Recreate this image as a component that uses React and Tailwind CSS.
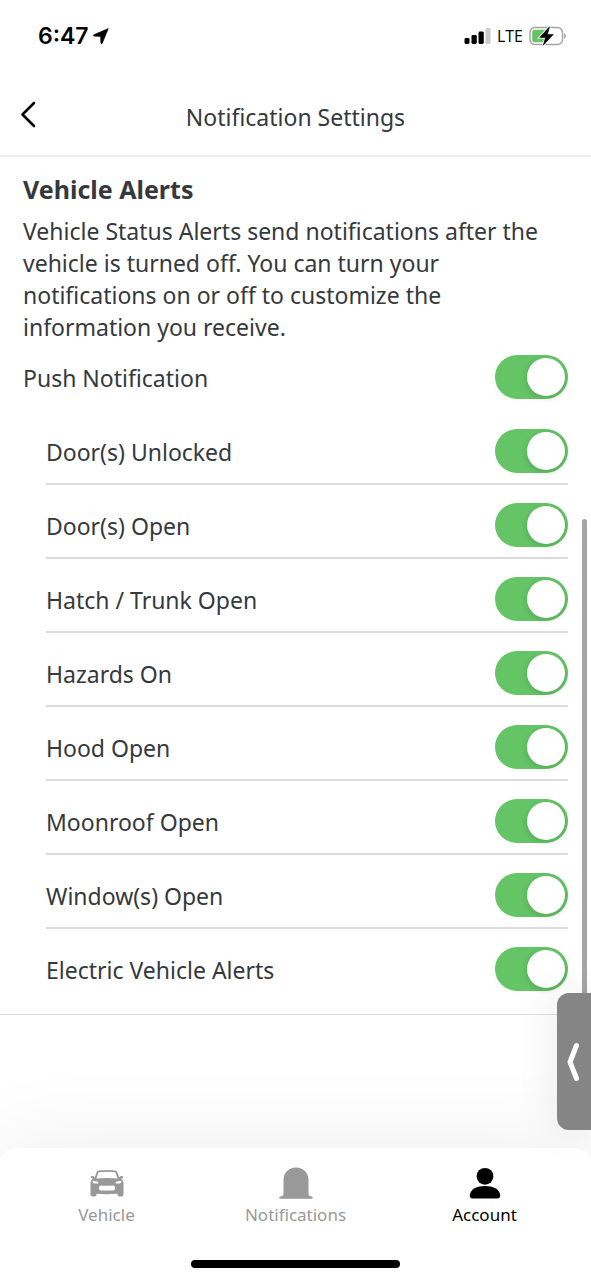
import React, { useState } from 'react';

const ALERTS = [
  { id: 'door-unlocked', label: 'Door(s) Unlocked' },
  { id: 'door-open', label: 'Door(s) Open' },
  { id: 'hatch', label: 'Hatch / Trunk Open' },
  { id: 'hazards', label: 'Hazards On' },
  { id: 'hood', label: 'Hood Open' },
  { id: 'moonroof', label: 'Moonroof Open' },
  { id: 'windows', label: 'Window(s) Open' },
  { id: 'ev', label: 'Electric Vehicle Alerts' },
];

function Toggle({ id, checked, onChange }) {
  return (
    <input
      id={id}
      type="checkbox"
      role="switch"
      checked={checked}
      onChange={onChange}
      className="h-11 w-[73px] shrink-0 cursor-pointer appearance-none rounded-full bg-gray-300 p-[3px] before:block before:size-[38px] before:rounded-full before:bg-white before:shadow-[0_2px_6px_rgba(0,0,0,0.15)] before:content-[''] checked:bg-[#64c466] checked:before:ml-auto"
    />
  );
}

function StatusBar() {
  return (
    <div className="flex h-[72px] items-center justify-between pr-6 pl-[38px] text-black">
      <div className="flex items-center gap-1">
        <span className="font-['Inter',sans-serif] text-[23px] font-semibold">6:47</span>
        <svg className="size-4" viewBox="0 0 16 16" fill="currentColor">
          <path d="M15.300 .6 .7 6.800c-.6.300-.5 1.200.2 1.300l6.700.400.300 6.700c.1.700 1 .8 1.300.200z" stroke="currentColor" strokeWidth=".6" strokeLinejoin="round" />
        </svg>
      </div>
      <div className="flex items-center gap-1.5">
        <svg className="h-4 w-[27px]" viewBox="0 0 27 16">
          <rect x="0.500" y="10" width="5" height="6" rx="1.4" />
          <rect x="7.500" y="7" width="5.300" height="9" rx="1.4" />
          <rect x="14.500" y="3.500" width="5.300" height="12.500" rx="1.4" />
          <rect x="21.500" y="0" width="5" height="16" rx="1.4" fill="#cbcbcb" />
        </svg>
        <span className="font-['Open_Sans',sans-serif] text-base font-medium">LTE</span>
        <svg className="h-5 w-[38px]" viewBox="0 0 38 20">
          <rect x="1" y="1.500" width="32.500" height="17" rx="5" fill="none" stroke="#a3a3a3" strokeWidth="1.400" />
          <path d="M6 3.800h10.500v12.400H6a2.800 2.800 0 0 1-2.800-2.800V6.600A2.800 2.800 0 0 1 6 3.800z" fill="#64c466" />
          <path d="M35 7.300c2.400.6 2.400 4.800 0 5.400z" fill="#a3a3a3" />
          <path d="M20.500 .8 10.700 11.600h5.800L14.300 19.200 24.300 8.400h-5.900z" stroke="#fff" strokeWidth="2.400" />
          <path d="M20.500 .8 10.700 11.600h5.800L14.300 19.200 24.300 8.400h-5.900z" stroke="#000" strokeWidth=".6" strokeLinejoin="round" />
        </svg>
      </div>
    </div>
  );
}

function Header() {
  return (
    <header className="grid h-[85px] grid-cols-[48px_1fr_48px] items-center border-b-2 border-[#ececec] px-2">
      <button type="button" aria-label="Back" className="flex h-12 items-center justify-center pr-2">
        <svg className="h-7 w-4" viewBox="0 0 16 28" fill="none" stroke="#000" strokeWidth="2.600" strokeLinecap="round" strokeLinejoin="round">
          <path d="M14 3 2.500 14.500 14 26" />
        </svg>
      </button>
      <h1 className="pt-2 text-center text-[23px]">Notification Settings</h1>
    </header>
  );
}

function CarIcon() {
  return (
    <svg className="h-8 w-9" viewBox="0 0 36 32" fill="currentColor">
      <path
        fillRule="evenodd"
        d="M9.500 3.500C15 2.700 21 2.700 26.500 3.500c.9.200 1.500.6 1.800 1.500l2 5.600c.4-1 1.500-1.600 2.700-1.500 1.500.1 1.700 1.700.4 2.100l-1.300.5c1.800 1.300 2.400 2.600 2.400 4.500v11.300c0 1.300-.8 2-2 2h-2c-1.200 0-2-.7-2-2v-.7c-6.500.5-14.500.5-21 0v.7c0 1.300-.8 2-2 2h-2c-1.200 0-2-.7-2-2V16.200c0-1.900.6-3.200 2.400-4.500l-1.300-.5C1.300 10.800 1.500 9.200 3 9.100c1.200-.1 2.300.5 2.700 1.500l2-5.600c.3-.9.900-1.300 1.800-1.500zM9.600 5.300 7.400 11.600c7-.7 14.200-.7 21.200 0L26.400 5.300C21 4.500 15 4.500 9.600 5.300zM3.600 14c0 1.800.6 2.400 1.900 2.400h3.900c.2-1.300-.6-2.100-2.200-2.200zm28.800 0-3.600.2c-1.600.1-2.400.9-2.200 2.200h3.900c1.300 0 1.900-.6 1.900-2.400zM12 18.400c-1.400 0-2.100.9-2.100 2.500s.7 2.500 2.100 2.500h12c1.400 0 2.100-.9 2.100-2.500s-.7-2.500-2.100-2.500c-4 .4-8 .4-12 0z"
      />
    </svg>
  );
}

function BellIcon() {
  return (
    <svg className="h-8 w-9" viewBox="0 0 36 32" fill="currentColor">
      <path d="M5.500 13C5.500 5.500 10.800 .5 18 .5s12.500 5 12.500 12.500v13.500c0 2 1 2.600 3.300 3 1.300.3 1.300 2.300-.1 2.300H2.300c-1.400 0-1.400-2-.1-2.300 2.300-.4 3.300-1 3.300-3z" />
    </svg>
  );
}

function PersonIcon() {
  return (
    <svg className="h-8 w-9" viewBox="0 0 36 32" fill="currentColor">
      <circle cx="18" cy="9.300" r="8.400" />
      <path d="M2.800 28C3.500 22 10 18.900 18 18.900s14.500 3.100 15.200 9.100c.2 2.200-.8 3.600-2.800 3.600H5.600c-2 0-3-1.400-2.800-3.600z" />
    </svg>
  );
}

const TABS = [
  { label: 'Vehicle', Icon: CarIcon },
  { label: 'Notifications', Icon: BellIcon },
  { label: 'Account', Icon: PersonIcon },
];

function TabBar() {
  const [active, setActive] = useState('Account');
  return (
    <nav className="rounded-t-2xl bg-white px-3 pt-[19px] pb-[11px] shadow-[0_0_90px_rgba(0,0,0,0.08)]">
      <div className="grid grid-cols-3">
        {TABS.map(({ label, Icon }) => (
          <button
            key={label}
            type="button"
            onClick={() => setActive(label)}
            className={`flex flex-col items-center gap-1 text-[17px] leading-6 ${active === label ? 'text-black' : 'text-[#999999]'}`}
          >
            <Icon />
            {label}
          </button>
        ))}
      </div>
      <div className="mx-auto mt-[33px] h-2 w-[37%] rounded-full bg-black" />
    </nav>
  );
}

export default function App() {
  const [push, setPush] = useState(true);
  const [enabled, setEnabled] = useState(() => Object.fromEntries(ALERTS.map((a) => [a.id, true])));

  const toggle = (id) => setEnabled((prev) => ({ ...prev, [id]: !prev[id] }));

  return (
    <div className="relative flex min-h-screen flex-col overflow-hidden bg-white font-['Noto_Sans',sans-serif] text-[#35393d]">
      <StatusBar />
      <Header />

      <main className="grow pb-24">
        <section className="border-b border-[#dddddd] pt-4 pr-[23px] pb-[11px] pl-[23px]">
          <h2 className="text-[25px] leading-8 font-bold">Vehicle Alerts</h2>
          <p className="mt-[10px] pr-4 text-[23px] leading-8">
            Vehicle Status Alerts send notifications after the vehicle is turned off. You can turn your notifications on
            or off to customize the information you receive.
          </p>

          <div className="mt-3 flex items-center justify-between">
            <label htmlFor="push" className="pt-0.5 text-[23px]">Push Notification</label>
            <Toggle id="push" checked={push} onChange={() => setPush(!push)} />
          </div>

          <ul className="mt-3 pl-[23px]">
            {ALERTS.map(({ id, label }) => (
              <li
                key={id}
                className="flex items-center justify-between border-b-2 border-[#dbdbe0] pt-[18px] pb-[10px] last:border-transparent"
              >
                <label htmlFor={id} className="pt-0.5 text-[23px]">{label}</label>
                <Toggle id={id} checked={enabled[id]} onChange={() => toggle(id)} />
              </li>
            ))}
          </ul>
        </section>
      </main>

      <TabBar />

      {/* scroll indicator and edge panel handle sit over the list */}
      <div className="absolute top-[519px] right-1 h-[500px] w-[5px] rounded-full bg-[#a5a5a5]" />
      <button
        type="button"
        aria-label="Open panel"
        className="absolute top-[993px] right-0 flex h-[137px] w-[34px] items-center justify-center rounded-l-xl bg-[#858585] shadow-[0_0_40px_rgba(0,0,0,0.1)]"
      >
        <svg className="h-10 w-4" viewBox="0 0 16 40" fill="none" stroke="#fff" strokeWidth="5" strokeLinecap="round" strokeLinejoin="round">
          <path d="M10.500 3.500 4 20l6.500 16.500" />
        </svg>
      </button>
    </div>
  );
}
